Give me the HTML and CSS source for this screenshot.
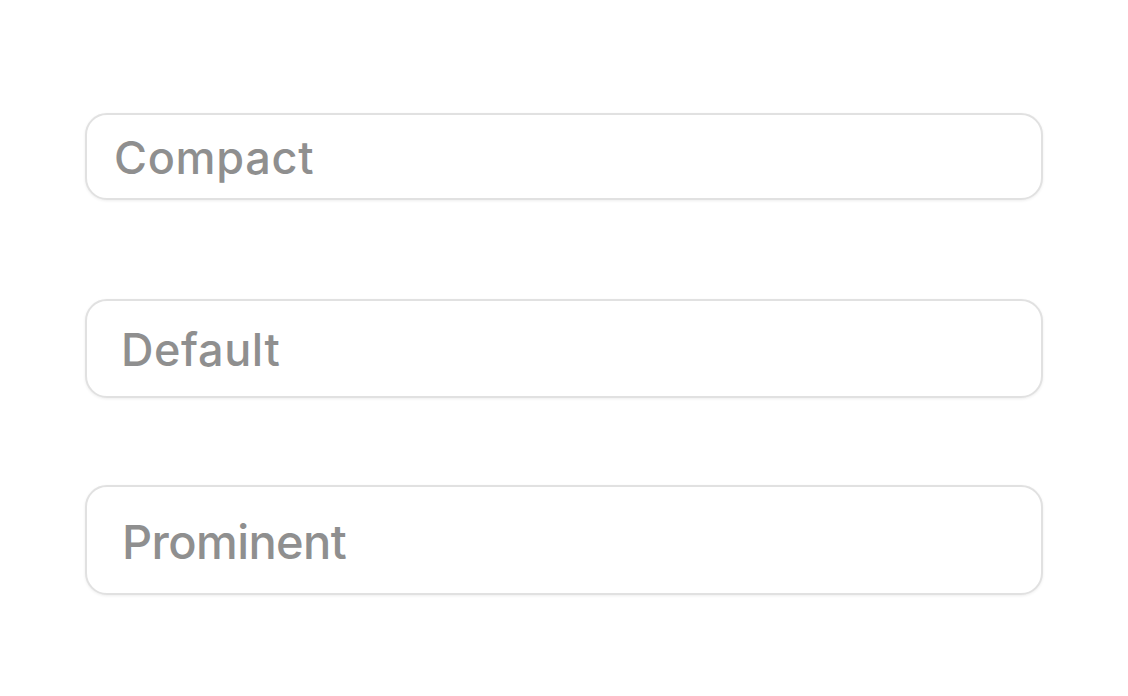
FILE: index.html
```html
<!DOCTYPE html>
<html lang="en">
<head>
<meta charset="utf-8">
<title>Text field sizes</title>
<link rel="stylesheet" href="styles.css">
</head>
<body>
<main class="stack">
  <div class="slot"><div class="field field-compact"><span class="placeholder">Compact</span></div></div>
  <div class="slot"><div class="field field-default"><span class="placeholder">Default</span></div></div>
  <div class="slot"><div class="field field-prominent"><span class="placeholder">Prominent</span></div></div>
</main>
</body>
</html>
```

FILE: styles.css
```css
html, body {
  margin: 0;
  padding: 0;
  background: #ffffff;
}

.stack {
  height: 696px;
  box-sizing: border-box;
  padding: 0 85px;
  display: grid;
  grid-template-rows: repeat(3, 192px);
  align-content: center;
}

.slot {
  display: flex;
  align-items: center;
}

.field {
  width: 100%;
  box-sizing: border-box;
  border: 2px solid #e1e1e1;
  border-radius: 22px;
  background: #ffffff;
  box-shadow: 0 1px 3px rgba(0, 0, 0, 0.07);
  display: flex;
  align-items: center;
  font-family: Inter, "Liberation Sans", sans-serif;
  font-weight: 500;
  color: #8f8f8f;
}

.placeholder {
  line-height: 1;
}

.field-compact {
  height: 87px;
  padding: 3px 0 0 27px;
  font-size: 45px;
  letter-spacing: 0.7px;
}

.field-default {
  height: 99px;
  padding: 3px 0 0 34px;
  font-size: 45px;
  letter-spacing: 0.6px;
}

.field-prominent {
  height: 110px;
  padding: 2px 0 0 35px;
  font-size: 47px;
  letter-spacing: -0.6px;
}
```
